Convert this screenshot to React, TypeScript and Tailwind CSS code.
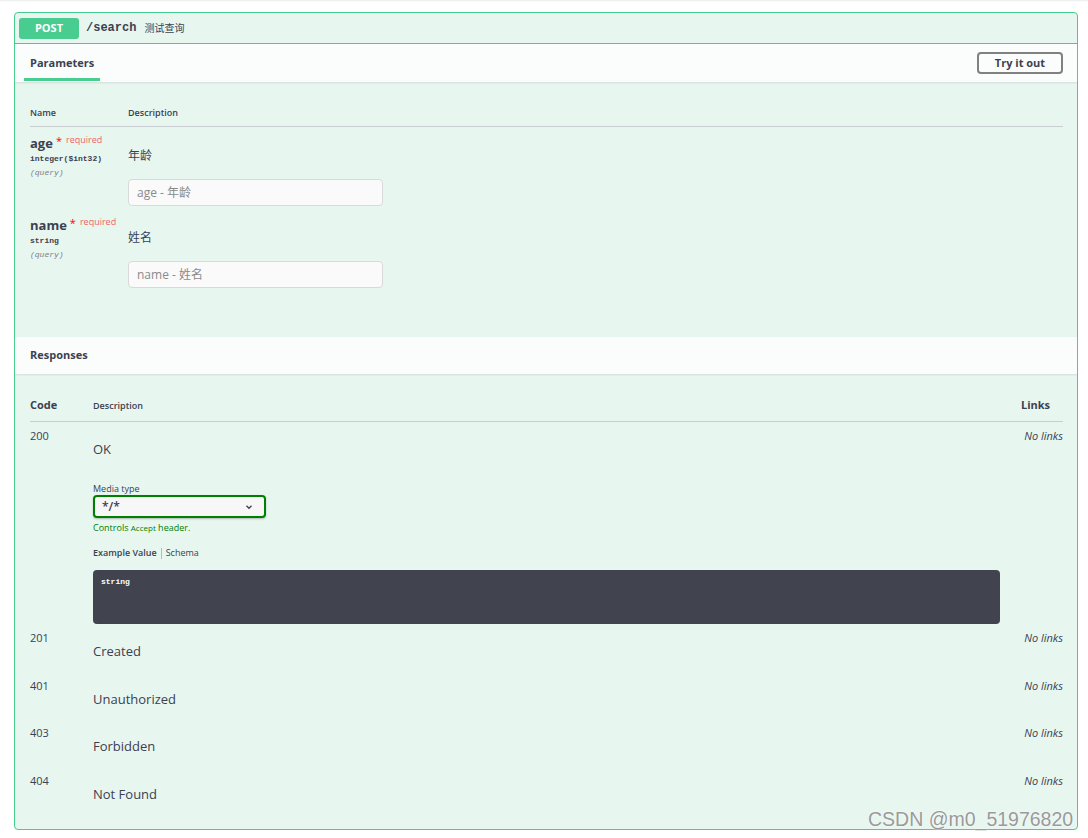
import React from 'react';

const text = 'text-[#3b4151]';
const sans = 'font-["Open_Sans","Noto_Sans_CJK_SC",sans-serif]';
const mono = 'font-["Liberation_Mono","Noto_Sans_CJK_SC",monospace]';

function ParamRow({ name, type, desc, placeholder }: { name: string; type: string; desc: string; placeholder: string }) {
  return (
    <div className="flex pb-[3px]">
      <div className="w-[98px] shrink-0 pt-[8px]">
        <div className="flex items-start leading-[16px]">
          <span className="text-[13px] font-bold">{name}</span>
          <span className="ml-[3px] text-[11px] text-[#ff0000] leading-[12px]">*</span>
          <span className="ml-[4px] text-[9px] leading-[10px] text-[#f0646b]">required</span>
        </div>
        <div className={`${mono} text-[8px] font-bold leading-[12px] mt-[2px]`}>{type}</div>
        <div className={`${mono} text-[8px] italic text-[#808080] leading-[12px] mt-[2px]`}>(query)</div>
      </div>
      <div className="flex-1 pt-[21px]">
        <div className="text-[12px] leading-[16px]">{desc}</div>
        <div className="mt-[15px] w-[255px] h-[27px] rounded-[4px] border border-[#d9d9d9] bg-[#fafafa] flex items-center px-[8px] text-[12px] text-[#8a8a8a]">
          {placeholder}
        </div>
      </div>
    </div>
  );
}

function RespRow({ code, desc, children, pb = 'pb-[12px]' }: { code: string; desc: string; children?: React.ReactNode; pb?: string }) {
  return (
    <div className={`flex pt-[7px] ${pb}`}>
      <div className="w-[63px] shrink-0 text-[11px] leading-[14px]">{code}</div>
      <div className="flex-1 min-w-0 pr-[21px]">
        <p className="mt-[12px] text-[13px] leading-[17px]">{desc}</p>
        {children}
      </div>
      <div className="w-[42px] shrink-0 text-right text-[11px] italic leading-[14px] whitespace-nowrap">No links</div>
    </div>
  );
}

export default function App() {
  return (
    <div className={`relative min-h-[838px] w-[1088px] bg-white ${sans} ${text}`}>
      <div className="h-[2px] bg-gradient-to-b from-[#ececec] to-white" />
      <div className="ml-[14px] mt-[10px] w-[1064px] h-[818px] rounded-[4px] border border-[#49cc90] bg-[#e8f6f0] flex flex-col overflow-hidden">
        {/* summary */}
        <div className="h-[31px] border-b border-[#49cc90] flex items-center px-[4px]">
          <div className="w-[60px] h-[21px] rounded-[3px] bg-[#49cc90] text-white text-[11px] font-bold flex items-center justify-center">POST</div>
          <span className={`ml-[7px] ${mono} text-[12px] font-bold`}>/search</span>
          <span className="ml-[8px] text-[10px]">测试查询</span>
        </div>

        {/* parameters header */}
        <div className="h-[38px] bg-white/80 shadow-[0_1px_2px_rgba(0,0,0,0.1)] flex items-center justify-between pl-[9px] pr-[14px]">
          <div className="relative h-full flex items-center px-[6px]">
            <span className="text-[11px] font-bold">Parameters</span>
            <div className="absolute left-0 right-0 bottom-[1px] h-[3px] bg-[#49cc90]" />
          </div>
          <div className="w-[86px] h-[22px] rounded-[4px] border-2 border-[#808080] flex items-center justify-center text-[11px] font-bold">Try it out</div>
        </div>

        {/* parameters body */}
        <div className="h-[255px] pl-[15px] pr-[14px] pt-[19px]">
          <div className="h-[26px] pb-[1px] flex items-center border-b border-[#c9cdd1] text-[9px] font-semibold">
            <div className="w-[98px]">Name</div>
            <div>Description</div>
          </div>
          <ParamRow name="age" type="integer($int32)" desc="年龄" placeholder="age - 年龄" />
          <ParamRow name="name" type="string" desc="姓名" placeholder="name - 姓名" />
        </div>

        {/* responses header */}
        <div className="h-[37px] bg-white/80 shadow-[0_1px_2px_rgba(0,0,0,0.1)] flex items-center pl-[15px]">
          <span className="text-[11px] font-bold">Responses</span>
        </div>

        {/* responses body */}
        <div className="pl-[15px] pr-[14px] pt-[18px]">
          <div className="h-[30px] pb-[2px] flex items-center border-b border-[#c9cdd1]">
            <div className="w-[63px] text-[11px] font-bold">Code</div>
            <div className="flex-1 text-[9px] font-semibold">Description</div>
            <div className="w-[42px] text-[11px] font-bold">Links</div>
          </div>
          <RespRow code="200" desc="OK" pb="pb-0">
            <div className="mt-[25px] text-[9px] leading-[12px]">Media type</div>
            <div className="w-[173px] h-[23px] rounded-[4px] border-2 border-[#008000] bg-[#f7f7f7] shadow-[0_1px_2px_rgba(0,0,0,0.25)] flex items-center justify-between pl-[7px] pr-[10px]">
              <span className="text-[12px] font-semibold">*/*</span>
              <svg width="10" height="10" viewBox="0 0 20 20">
                <path d="M5 7.5l5 5 5-5" fill="none" stroke="#3b4151" strokeWidth="2.6" />
              </svg>
            </div>
            <div className="mt-[4px] text-[9px] leading-[12px] text-[#008000]">
              Controls <span className="text-[8px]">Accept</span> header.
            </div>
            <div className="mt-[13px] text-[9px] leading-[12px] flex items-center">
              <span className="font-semibold">Example Value</span>
              <span className="mx-[4px] h-[11px] w-px bg-[#b5b9c0]" />
              <span>Schema</span>
            </div>
            <div className="mt-[11px] h-[54px] rounded-[4px] bg-[#41444e] px-[8px] pt-[7px]">
              <div className={`${mono} text-[8px] leading-[10px] font-bold text-white`}>string</div>
            </div>
          </RespRow>
          <RespRow code="201" desc="Created" />
          <RespRow code="401" desc="Unauthorized" pb="pb-[11px]" />
          <RespRow code="403" desc="Forbidden" />
          <RespRow code="404" desc="Not Found" />
        </div>
      </div>
      <div className='absolute left-[868px] top-[806px] text-[19.5px] leading-[26px] text-[#9a9a9a] font-["Liberation_Sans",Arial,sans-serif] [text-shadow:0_0_2px_#fff]'>
        CSDN @m0_51976820
      </div>
    </div>
  );
}
